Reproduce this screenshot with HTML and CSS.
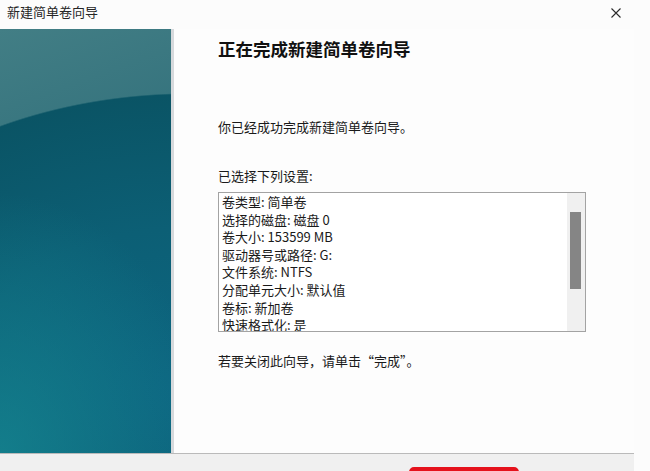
FILE: index.html
```html
<!DOCTYPE html>
<html lang="zh-CN">
<head>
    <meta charset="UTF-8">
    <meta name="viewport" content="width=device-width, initial-scale=1.0">
    <title>新建简单卷向导</title>
    <link rel="stylesheet" href="styles.css">
</head>
<body>
    <div class="window">
        <div class="titlebar">
            <span class="title">新建简单卷向导</span>
            <svg class="close" width="10" height="10" viewBox="0 0 10 10">
                <path d="M0.5 0.5 L9.5 9.5 M9.5 0.5 L0.5 9.5" stroke="#2b2b2b" stroke-width="1.1" fill="none"/>
            </svg>
        </div>

        <div class="main">
            <div class="side"></div>
            <div class="content">
                <h1>正在完成新建简单卷向导</h1>
                <p class="done">你已经成功完成新建简单卷向导。</p>
                <p class="label">已选择下列设置:</p>

                <div class="summary">
                    <div class="lines">
                        <div>卷类型: 简单卷</div>
                        <div>选择的磁盘: 磁盘 0</div>
                        <div>卷大小: 153599 MB</div>
                        <div>驱动器号或路径: G:</div>
                        <div>文件系统: NTFS</div>
                        <div>分配单元大小: 默认值</div>
                        <div>卷标: 新加卷</div>
                        <div>快速格式化: 是</div>
                    </div>
                    <div class="scroll">
                        <div class="thumb"></div>
                    </div>
                </div>

                <p class="hint">若要关闭此向导，请单击“完成”。</p>
            </div>
        </div>

        <div class="footer">
            <button class="finish" type="button">完成</button>
        </div>
    </div>
</body>
</html>
```

FILE: styles.css
```css
* {
    box-sizing: border-box;
}

body {
    margin: 0;
    background-color: #fcfcfc;
    color: #1a1a1a;
    font-family: 'Noto Sans CJK SC', 'Noto Sans', sans-serif;
    font-size: 13px;
}

.window {
    width: 650px;
    height: 471px;
    overflow: hidden;
}

.titlebar {
    display: flex;
    align-items: flex-start;
    height: 29px;
    padding-top: 3px;
    padding-left: 7px;
}

.title {
    line-height: 18px;
    color: #262626;
}

.close {
    margin-left: auto;
    margin-right: 29px;
    margin-top: 5px;
}

.main {
    display: flex;
    width: 634px;
    height: 424px;
}

/* teal artwork strip on the left of the wizard */
.side {
    width: 174px;
    flex-shrink: 0;
    border-right: 3px solid #d6d9dc;
    background:
        radial-gradient(ellipse 210px 260px at 0 100%, rgba(22, 138, 148, 0.7), rgba(22, 138, 148, 0) 100%),
        radial-gradient(ellipse 420px 300px at 190px 364px, #0d6682 0%, #0c5f75 55%, #0a5465 99.5%, rgba(10, 84, 101, 0) 100%),
        linear-gradient(160deg, #427e85 0%, #2f6e7a 45%, #1d6072 100%);
}

.content {
    flex: 1;
    padding-top: 8px;
    padding-left: 44px;
    background-color: #fdfdfd;
}

.content h1 {
    margin: 0;
    font-size: 17.5px;
    line-height: 24px;
    font-weight: 700;
    color: #111;
}

.content p {
    margin: 0;
    line-height: 18px;
}

.done {
    margin-top: 57px !important;
}

.label {
    margin-top: 31px !important;
}

.summary {
    display: flex;
    width: 368px;
    height: 140px;
    margin-top: 7px;
    border: 1px solid #a3a3a3;
    background-color: #fff;
}

.lines {
    flex: 1;
    overflow: hidden;
    padding-left: 3px;
    line-height: 17.6px;
    white-space: nowrap;
}

.scroll {
    width: 18px;
    background-color: #f0f0f0;
}

.thumb {
    width: 11px;
    height: 77px;
    margin-top: 19px;
    margin-left: 3px;
    background-color: #858585;
}

.hint {
    margin-top: 20px !important;
}

.footer {
    width: 634px;
    height: 18px;
    border-top: 1px solid #bababa;
    background-color: #f0f0f0;
    overflow: hidden;
}

.finish {
    display: block;
    width: 110px;
    height: 26px;
    margin-top: 13px;
    margin-left: 409px;
    border: 4px solid #e5121c;
    border-radius: 5px;
    background-color: #e1e1e1;
    font-family: inherit;
    font-size: 13px;
}
```
